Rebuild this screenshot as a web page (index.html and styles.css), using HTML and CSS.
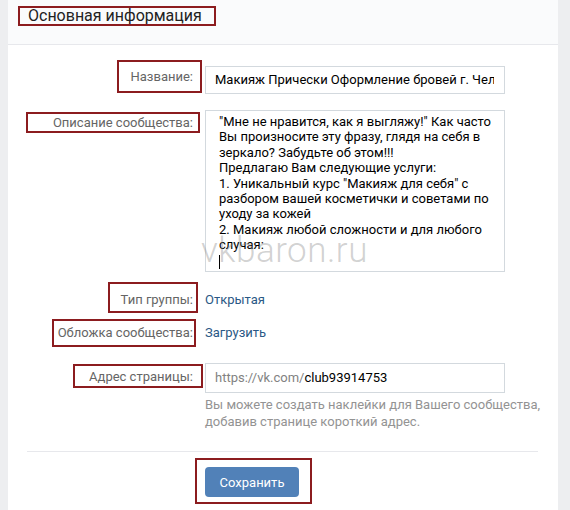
FILE: index.html
```html
<!DOCTYPE html>
<html lang="ru">

<head>
    <meta charset="UTF-8">
    <meta name="viewport" content="width=device-width, initial-scale=1.0">
    <title>Основная информация</title>
    <link rel="stylesheet" href="styles.css">
</head>

<body>
    <div class="panel">
        <header class="panel-head">
            <span class="mark mark-title">Основная информация</span>
        </header>

        <main class="panel-body">
            <div class="row row-name">
                <div class="label"><span class="mark mark-name">Название:</span></div>
                <div class="field">
                    <div class="input"><div class="input-text">Макияж Прически Оформление бровей г. Челябинск</div></div>
                </div>
            </div>

            <div class="row row-desc">
                <div class="label"><span class="mark mark-desc">Описание сообщества:</span></div>
                <div class="field field-desc">
                    <div class="textarea">
                        <div>"Мне не нравится, как я выгляжу!" Как часто</div>
                        <div>Вы произносите эту фразу, глядя на себя в</div>
                        <div>зеркало? Забудьте об этом!!!</div>
                        <div>Предлагаю Вам следующие услуги:</div>
                        <div>1. Уникальный курс "Макияж для себя" с</div>
                        <div>разбором вашей косметички и советами по</div>
                        <div>уходу за кожей</div>
                        <div>2. Макияж любой сложности и для любого</div>
                        <div>случая:</div>
                        <div><span class="caret"></span></div>
                    </div>
                    <span class="watermark">vkbaron.ru</span>
                </div>
            </div>

            <div class="row row-short row-type">
                <div class="label"><span class="mark mark-type">Тип группы:</span></div>
                <div class="field"><span class="value">Открытая</span></div>
            </div>

            <div class="row row-short row-cover">
                <div class="label"><span class="mark mark-cover">Обложка сообщества:</span></div>
                <div class="field"><span class="value">Загрузить</span></div>
            </div>

            <div class="row row-address">
                <div class="label"><span class="mark mark-address">Адрес страницы:</span></div>
                <div class="field">
                    <div class="input input-address"><span class="prefix">https://vk.com/</span>club93914753</div>
                    <p class="hint">Вы можете создать наклейки для Вашего сообщества,<br>добавив странице короткий адрес.</p>
                </div>
            </div>
        </main>

        <div class="separator"></div>

        <footer class="panel-foot">
            <span class="mark mark-save"><button class="btn">Сохранить</button></span>
        </footer>
    </div>
</body>

</html>
```

FILE: styles.css
```css
/* Global */
* {
    box-sizing: border-box;
}

body {
    margin: 0;
    background-color: #edeef0;
    font-family: Roboto, "Open Sans", Arial, sans-serif;
    font-size: 13px;
    color: #000;
}

/* Panel */
.panel {
    margin-left: 8px;
    width: 550px;
    height: 510px;
    background-color: #fff;
    overflow: hidden;
}

.panel-head {
    height: 45px;
    padding: 6px 0 0 10px;
    background-color: #fafbfc;
    border-bottom: 1px solid #e7e8ec;
}

.panel-body {
    padding-top: 21px;
}

/* Red annotation boxes */
.mark {
    display: inline-flex;
    justify-content: flex-end;
    align-items: flex-start;
    border: 2px solid #8c1c1f;
    line-height: 18px;
    white-space: nowrap;
}

.mark-title {
    justify-content: flex-start;
    width: 198px;
    height: 20px;
    padding-left: 8px;
    font-size: 16px;
    line-height: 16px;
    color: #222;
}

.mark-name {
    width: 85px;
    height: 33px;
    margin: -6px -9px 0 0;
    padding: 6px 7px 0 0;
}

.mark-desc {
    width: 174px;
    height: 21px;
    margin: 2px -7px 0 0;
    padding: 0 5px 0 0;
    line-height: 17px;
}

.mark-type {
    width: 90px;
    height: 31px;
    margin: -9px -5px 0 0;
    padding: 7px 3px 0 0;
}

.mark-cover {
    width: 144px;
    height: 28px;
    margin: -5px -3px 0 0;
    padding: 3px 1px 0 0;
}

.mark-address {
    width: 130px;
    height: 24px;
    margin: 1px -10px 0 0;
    padding: 2px 8px 0 0;
}

.mark-save {
    padding: 7px 11px 5px 8px;
    margin: 6px 0 0 187px;
}

/* Form rows */
.row {
    display: flex;
    gap: 12px;
}

.row-short {
    height: 18px;
}

.label {
    width: 185px;
    display: flex;
    justify-content: flex-end;
    align-items: flex-start;
    color: #656565;
}

.field {
    width: 300px;
}

.row-desc {
    margin-top: 16px;
}

.row-type {
    margin-top: 19px;
}

.row-cover {
    margin-top: 15px;
}

.row-address {
    margin-top: 21px;
}

.input {
    height: 28px;
    padding: 0 10px 0 9px;
    border: 1px solid #d3d9de;
    line-height: 26px;
    white-space: nowrap;
}

.input-text {
    overflow: hidden;
}

.input-address {
    height: 30px;
    line-height: 28px;
}

.prefix {
    color: #828282;
}

.field-desc {
    position: relative;
}

.textarea {
    height: 162px;
    padding: 3px 0 0 13px;
    border: 1px solid #d3d9de;
    line-height: 15.4px;
    white-space: nowrap;
}

.caret {
    display: inline-block;
    width: 1px;
    height: 14px;
    margin-top: 2px;
    background-color: #000;
}

.watermark {
    position: absolute;
    left: -4px;
    top: 120px;
    font-size: 35px;
    font-weight: 300;
    letter-spacing: 0.5px;
    color: rgba(140, 140, 140, 0.4);
    pointer-events: none;
}

.value {
    display: block;
    line-height: 18px;
    color: #2a5885;
}

.hint {
    margin: 3px 0 0;
    line-height: 17px;
    white-space: nowrap;
    color: #939393;
}

/* Footer */
.separator {
    height: 1px;
    margin: 21px 20px 0 19px;
    background-color: #e7e8ec;
}

.panel-foot {
    display: flex;
}

.btn {
    width: 94px;
    height: 30px;
    border: 0;
    border-radius: 4px;
    background-color: #5181b8;
    color: #fff;
    font-family: Roboto, "Open Sans", Arial, sans-serif;
    font-size: 13px;
}
```
